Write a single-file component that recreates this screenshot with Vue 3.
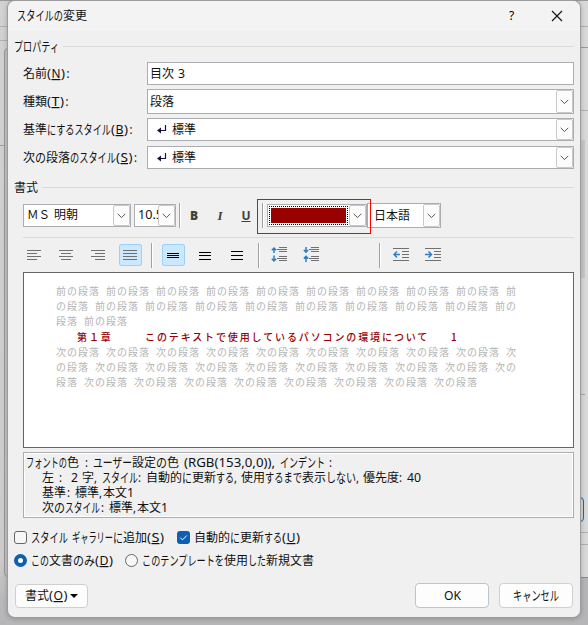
<script setup>
import { h } from 'vue'

const KANA = /^[ぁ-ヿー]+$/

// One line of label text. Each run is [text, width, underlined?];
// an empty text is a gap of the given width.
const Label = (props) => {
  let x = 0
  const nodes = []
  for (const [text, width, underlined] of props.runs) {
    if (text) {
      nodes.push(
        h('text', {
          x, y: 13, textLength: width, lengthAdjust: 'spacingAndGlyphs',
          class: ['run', { underlined, kana: KANA.test(text) }],
        }, text)
      )
    }
    x += width
  }
  return h('svg', { class: 'label-line', width: x, height: 18 }, nodes)
}
Label.props = ['runs']

const key = (k, w = 9) => [['(', 4], ['', 0.5], [k, w, true], ['', 0.5], [')', 4]]
const colon = [['', 1.5], [':', 3]]

const fields = [
  { cls: 'name', label: [['名前', 24], ...key('N'), ...colon], value: [['目次', 24], ['', 4], ['3', 7]] },
  { cls: 'kind', combo: true, label: [['種類', 24], ...key('T', 8), ...colon], value: [['段落', 24]] },
  { cls: 'base', combo: true, mark: true, label: [['基準', 24], ['にするスタイル', 64], ...key('B', 8), ...colon], value: [['標準', 24]] },
  { cls: 'next', combo: true, mark: true, label: [['次', 12], ['の', 11], ['段落', 24], ['のスタイル', 46], ...key('S', 7.5), ...colon], value: [['標準', 24]] },
]

const summary = [
  { indent: 0, runs: [['フォントの', 41], ['色', 12], ['', 6], [':', 3], ['', 5], ['ユーザー', 39], ['設定', 24], ['の', 11], ['色', 12], ['', 5], ['(RGB(153,0,0)),', 91], ['', 5], ['インデント', 45], ['', 4], [':', 3]] },
  { indent: 16, runs: [['左', 12], ['', 5], [':', 3], ['', 9], ['2', 7], ['', 4], ['字', 12], [',', 3], ['', 5], ['スタイル', 36], [':', 3], ['', 5], ['自動的', 36], ['に', 10], ['更新', 24], ['する', 18], [',', 3], ['', 4], ['使用', 24], ['するまで', 37], ['表示', 24], ['しない', 30], [',', 3], ['', 4], ['優先度', 36], [':', 3], ['', 5], ['40', 14]] },
  { indent: 16, runs: [['基準', 24], ['', 1], [':', 3], ['', 5], ['標準', 24], [',', 3], ['', 1], ['本文', 24], ['1', 7]] },
  { indent: 16, runs: [['次', 12], ['の', 11], ['スタイル', 35], ['', 1], [':', 3], ['', 5], ['標準', 24], [',', 3], ['', 1], ['本文', 24], ['1', 7]] },
]

const repeat = (word) => Array(8).fill(word).join(' ')
const before = [
  repeat('前の段落') + ' 前の段落 前',
  'の段落 ' + repeat('前の段落') + ' 前の',
  '段落 前の段落',
]
const after = [
  repeat('次の段落') + ' 次の段落 次',
  'の段落 ' + repeat('次の段落') + ' 次の',
  '段落 ' + repeat('次の段落'),
]

const aligns = [
  { on: false, d: 'M4 7.5h14M4 10.5h10M4 13.5h14M4 16.5h10' },
  { on: false, d: 'M4 7.5h14M6 10.5h10M4 13.5h14M6 16.5h10' },
  { on: false, d: 'M4 7.5h14M8 10.5h10M4 13.5h14M8 16.5h10' },
  { on: true, d: 'M4 7.5h14M4 10.5h14M4 13.5h14M4 16.5h14' },
]
const spacings = [
  { on: true, d: 'M5 10.5h12M5 12.5h12M5 14.5h12' },
  { on: false, d: 'M5 9.5h12M5 12.5h12M5 16.5h12' },
  { on: false, d: 'M5 8.5h12M5 12.5h12M5 16.5h12' },
]
</script>

<template>
  <div class="desktop">
    <div class="edge left"><i class="rule r1"></i><i class="rule r2"></i><i class="rule r3"></i><i class="pane"></i></div>
    <main class="dialog">
      <header class="title">
        <Label :runs="[['スタイルの', 46], ['変更', 24]]" />
        <span class="help">?</span>
        <svg class="close" width="12" height="12" viewBox="0 0 12 12"><path d="M1 1l10 10M11 1L1 11" /></svg>
      </header>

      <div class="section"><Label :runs="[['プロパティ', 45]]" /><i></i></div>
      <div class="fields">
        <div v-for="f in fields" :key="f.cls" class="field" :class="f.cls">
          <div class="caption"><Label :runs="f.label" /></div>
          <div class="box">
            <svg v-if="f.mark" class="mark" width="10" height="9" viewBox="0 0 10 9"><path d="M8.5 0v5.5H2" /><path class="tip" d="M0 5.5L4 2.5v6z" /></svg>
            <Label :runs="f.value" />
            <span v-if="f.combo" class="drop"><svg width="9" height="6" viewBox="0 0 9 6"><path d="M.7 .8l3.8 3.8L8.3 .8" /></svg></span>
          </div>
        </div>
      </div>

      <div class="section format"><Label :runs="[['書式', 24]]" /><i></i></div>
      <div class="fontbar">
        <div class="box face"><Label :runs="[['ＭＳ', 23], ['', 4], ['明朝', 24]]" /><span class="drop"><svg width="9" height="6" viewBox="0 0 9 6"><path d="M.7 .8l3.8 3.8L8.3 .8" /></svg></span></div>
        <div class="box size"><div class="clip"><Label :runs="[['10.5', 25]]" /></div><span class="drop"><svg width="9" height="6" viewBox="0 0 9 6"><path d="M.7 .8l3.8 3.8L8.3 .8" /></svg></span></div>
        <i class="sep"></i>
        <div class="letters"><b>B</b><em>I</em><u>U</u></div>
        <i class="sep"></i>
        <div class="box color"><div class="focus"><div class="swatch"></div></div><span class="drop"><svg width="9" height="6" viewBox="0 0 9 6"><path d="M.7 .8l3.8 3.8L8.3 .8" /></svg></span></div>
        <div class="box lang"><Label :runs="[['日本語', 36]]" /><span class="drop"><svg width="9" height="6" viewBox="0 0 9 6"><path d="M.7 .8l3.8 3.8L8.3 .8" /></svg></span></div>
        <div class="callout"></div>
      </div>
      <hr />

      <div class="parabar">
        <div class="group aligns">
          <span v-for="(a, i) in aligns" :key="i" class="tool" :class="{ on: a.on }"><svg width="23" height="22" viewBox="0 0 23 22"><path :d="a.d" /></svg></span>
        </div>
        <i class="sep"></i>
        <div class="group spacings">
          <span v-for="(s, i) in spacings" :key="i" class="tool dark" :class="{ on: s.on }"><svg width="23" height="22" viewBox="0 0 23 22"><path :d="s.d" /></svg></span>
        </div>
        <i class="sep"></i>
        <div class="group gaps">
          <svg width="16" height="17" viewBox="0 0 16 17"><path d="M8 1.5h8M6 3.5h10M8 5.5h8M8 10.5h8M6 12.5h10M8 14.5h8" /><path class="blue" d="M3 7V2M.8 4.2L3 2 5.2 4.2M3 9.5V15M.8 12.8L3 15 5.2 12.8" /></svg>
          <svg width="16" height="17" viewBox="0 0 16 17"><path d="M8 1.5h8M6 3.5h10M8 5.5h8M8 10.5h8M6 12.5h10M8 14.5h8" /><path class="blue" d="M3 1V6.2M.8 4L3 6.2 5.2 4M3 16V10.3M.8 12.5L3 10.3 5.2 12.5" /></svg>
        </div>
        <i class="sep"></i>
        <div class="group indents">
          <svg width="16" height="14" viewBox="0 0 16 14"><path d="M0 .5h16M9 3.5h7M9 6.5h7M9 9.5h7M0 12.5h16" /><path class="blue" d="M7 6.5H1M4 3.5l-3 3 3 3" /></svg>
          <svg width="16" height="14" viewBox="0 0 16 14"><path d="M0 .5h16M9 3.5h7M9 6.5h7M9 9.5h7M0 12.5h16" /><path class="blue" d="M0 6.5h6M3.5 3.5l3 3-3 3" /></svg>
        </div>
      </div>

      <div class="preview">
        <p v-for="(t, i) in before" :key="'b' + i">{{ t }}</p>
        <p class="sample"><span class="chapter">第１章</span><span class="topic">このテキストで使用しているパソコンの環境について</span><span>1</span></p>
        <p v-for="(t, i) in after" :key="'a' + i">{{ t }}</p>
      </div>

      <div class="summary">
        <div v-for="(l, i) in summary" :key="i" class="line" :class="{ inset: l.indent }"><Label :runs="l.runs" /></div>
      </div>

      <div class="choices checks">
        <span class="check"></span>
        <Label class="first" :runs="[['スタイル', 37], ['', 4], ['ギャラリー', 41], ['に', 10], ['追加', 24], ...key('S', 8)]" />
        <span class="check on"><svg width="13" height="13" viewBox="0 0 13 13"><path d="M3.3 6.7l2.2 2.2 4.3-4.4" /></svg></span>
        <Label :runs="[['自動的', 36], ['に', 10], ['更新', 24], ['する', 18], ...key('U', 9)]" />
      </div>
      <div class="choices radios">
        <span class="radio on"></span>
        <Label class="first" :runs="[['この', 18], ['文書', 24], ['のみ', 22], ...key('D', 9)]" />
        <span class="radio"></span>
        <Label :runs="[['このテンプレートを', 82], ['使用', 24], ['した', 18], ['新規文書', 48]]" />
      </div>

      <footer class="actions">
        <div class="button format-menu"><Label :runs="[['書式', 24], ...key('O', 9.5)]" /><i class="caret"></i></div>
        <div class="button ok"><Label :runs="[['OK', 17]]" /></div>
        <div class="button cancel"><Label :runs="[['キャンセル', 46]]" /></div>
      </footer>
    </main>
    <div class="edge right"><i class="rule r1"></i><i class="rule r2"></i><i class="rule r3"></i><i class="shade"></i><i class="rule r4"></i><i class="peek"></i><i class="rule r5"></i><i class="rule r6"></i><i class="rule r7"></i></div>
  </div>
</template>

<style>
body { margin: 0; overflow: hidden; }
.label-line { display: block; flex: none; overflow: visible; }
.label-line .run { font: 12px "Noto Sans", "Noto Sans CJK JP", sans-serif; fill: #111; }
.label-line .kana { font-size: 13px; }
.label-line .underlined { text-decoration: underline; }
</style>

<style scoped>
.desktop { display: flex; width: 588px; height: 625px; box-sizing: border-box; padding-top: 1px; overflow: hidden; position: relative; background: linear-gradient(#999 0 1px, #d2d2d2 1px, #cbcbcb 560px, #b9b9bb 600px, #b6b6b9); }
.dialog { width: 572px; height: 616px; background: #f0f0f0; border-radius: 7px; box-shadow: 0 0 0 1px #9c9c9c, 0 1px 5px 1px rgba(0, 0, 0, .22); overflow: hidden; flex: none; display: flex; flex-direction: column; position: relative; z-index: 1; }
.edge { width: 8px; flex: none; position: relative; }
.edge i { position: absolute; }
.rule { left: 0; right: 0; height: 1px; background: #b0b0b0; }
.left .r1 { top: 25px; }
.left .r2 { top: 39px; }
.left .r3 { top: 144px; width: 4px; background: #999; }
.pane { left: 4px; top: 47px; width: 8px; height: 529px; border: 1px solid #999; border-radius: 7px; background: #c4c4c4; box-sizing: border-box; }
.right { background: linear-gradient(#d8d8d8 0 576px, #b5b5b8 576px); height: 624px; }
.right .r1 { top: 25px; }
.right .r2 { top: 46px; background: #999; }
.right .r3 { top: 109px; }
.right .shade { top: 139px; left: 0; width: 5px; height: 138px; background: #c8c8c8; }
.right .r4 { top: 393px; width: 5px; background: #aaa; }
.peek { left: -9px; top: 496px; width: 13px; height: 25px; box-sizing: border-box; border: 1px solid #1766b5; border-radius: 4px; }
.right .r5 { top: 531px; }
.right .r6 { top: 543px; }
.right .r7 { top: 576px; background: #888; }

.title { height: 30px; display: flex; align-items: center; padding: 0 17px 1px 9px; background: #f3f3f3; box-sizing: border-box; flex: none; }
.help { margin-left: auto; width: 7px; font: 12px/18px "Noto Sans", sans-serif; color: #000; }
.close { margin-left: 35px; fill: none; stroke: #111; stroke-width: 1.1; }

.section { height: 31px; display: flex; align-items: center; gap: 4px; padding: 0 6px; flex: none; }
.section i { flex: 1; height: 1px; background: #dadada; }
.format { margin-top: 3px; }

.fields { padding: 0 6px 0 15px; }
.field { display: flex; align-items: stretch; height: 23px; }
.field.kind { height: 25px; margin: 4px 0; }
.field.next { margin-top: 5px; }
.caption { width: 124px; display: flex; align-items: center; }
.box { background: #fff; border: 1px solid #abadb3; box-sizing: border-box; display: flex; align-items: center; }
.field .box { flex: 1; padding: 0 0 0 2px; }
.mark { margin: 0 5px 0 7px; fill: none; stroke: #1a1040; stroke-width: 1.2; }
.mark .tip { fill: #1a1040; stroke: none; }
.drop { margin-left: auto; align-self: stretch; width: 17px; box-sizing: border-box; border: 1px solid #c9c9c9; border-radius: 2px; background: #fcfcfc; display: flex; align-items: center; justify-content: center; flex: none; }
.drop svg { fill: none; stroke: #555; stroke-width: 1; }

.fontbar { height: 25px; margin-left: 15px; display: flex; align-items: center; position: relative; flex: none; }
.face { width: 108px; height: 23px; padding-left: 3px; }
.face .label-line, .size .label-line { margin-top: -2px; }
.size { width: 42px; height: 23px; margin-left: 3px; padding-left: 3px; }
.clip { width: 22px; overflow: hidden; }
.sep { width: 1px; height: 25px; background: #a0a0a0; box-shadow: 1px 0 #fff; flex: none; }
.size + .sep { margin-left: 3px; }
.letters { display: flex; width: 82px; font: bold 12px/16px "Noto Sans", sans-serif; color: #404040; }
.letters > * { width: 26px; text-align: center; }
.letters b { padding-left: 1px; }
.letters em { font: italic bold 13px/16px "Liberation Serif", serif; }
.color { width: 100px; height: 23px; margin-left: 4px; padding-left: 1px; }
.focus { width: 79px; height: 19px; box-sizing: border-box; border: 1px dotted #000; padding: 1px; }
.swatch { height: 15px; background: #990000; }
.lang { width: 74px; height: 25px; padding-left: 6px; }
.callout { position: absolute; left: 234px; top: -4px; width: 114px; height: 35px; box-sizing: border-box; border: 1px solid #ff0000; }
hr { height: 1px; border: 0; margin: 9px 6px 5px 15px; background: #dadada; flex: none; }

.parabar { height: 25px; padding-left: 15px; display: flex; flex: none; }
.group { display: flex; align-items: flex-start; padding-top: 1px; box-sizing: border-box; }
.group svg { fill: none; stroke: #707070; stroke-width: 1; flex: none; }
.group svg .blue { stroke: #2f7fc6; stroke-width: 1.5; }
.aligns { gap: 9px; width: 128px; }
.spacings { gap: 9px; width: 106px; padding-left: 10px; }
.tool { width: 23px; height: 22px; box-sizing: border-box; border-radius: 3px; display: flex; align-items: flex-start; justify-content: center; flex: none; }
.tool svg { margin-top: -1px; }
.tool.on { background: #cce8ff; box-shadow: inset 0 0 0 1px #99d1ff; }
.tool.dark svg { stroke: #000; }
.gaps { width: 120px; padding: 3px 0 0 12px; gap: 16px; }
.indents { padding: 5px 0 0 13px; gap: 16px; }

.preview { height: 176px; margin: 4px 6px 0 15px; box-sizing: border-box; border: 1px solid #646464; background: #fff; padding: 10px 0 0 32px; flex: none; }
.preview p { margin: 0; height: 15px; white-space: pre; font: 10px/15px "Noto Sans CJK JP", sans-serif; letter-spacing: 1px; word-spacing: 2.76px; color: #b4b4b4; }
.preview .sample { display: flex; height: 16px; line-height: 17px; color: #990000; font-weight: 500; letter-spacing: 1.88px; padding-left: 21px; }
.chapter { width: 68px; }
.topic { width: 306px; }

.summary { height: 66px; margin: 4px 6px 0 15px; box-sizing: border-box; border: 1px solid #abadb3; box-shadow: inset 0 0 0 1px #fff; padding: 1px 2px; flex: none; }
.line { height: 15px; }
.line.inset { padding-left: 16px; }

.choices { height: 19px; display: flex; align-items: center; padding-left: 6px; gap: 4px; flex: none; }
.checks { margin-top: 10px; }
.radios { margin-top: 4px; }
.check, .radio { width: 13px; height: 13px; box-sizing: border-box; border: 1px solid #666; background: #f7f7f7; border-radius: 3px; flex: none; }
.checks .first { margin-right: 9px; }
.radios .first { margin-right: 8px; }
.check.on { background: #0f5fb0; border: 0; }
.check.on svg { display: block; fill: none; stroke: #fff; stroke-width: 1; }
.radio { border-radius: 50%; }
.radio.on { border: 4px solid #0f5fb0; background: #fff; }

.actions { display: flex; align-items: flex-start; margin-top: 13px; padding: 0 7px; }
.button { width: 74px; height: 25px; box-sizing: border-box; border: 1px solid #cfcfcf; border-radius: 4px; background: #fdfdfd; display: flex; align-items: center; justify-content: center; }
.format-menu { width: 73px; height: 24px; margin-top: 1px; gap: 3px; }
.caret { border: 4px solid transparent; border-top-color: #000; border-bottom: 0; }
.ok { margin-left: auto; margin-right: 10px; border-color: #bcc4cc; }
</style>
